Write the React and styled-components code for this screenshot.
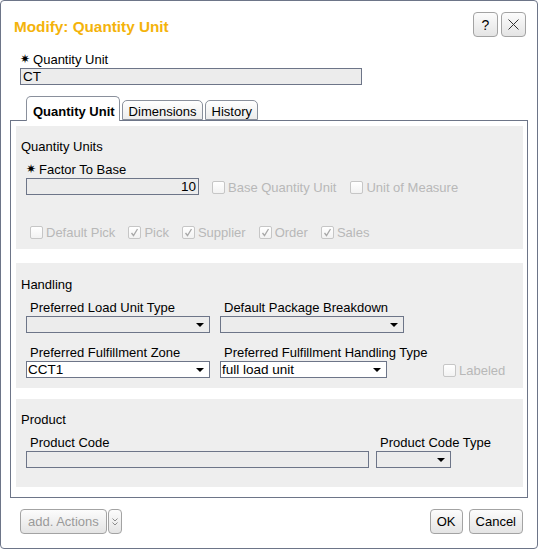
import React from 'react';
import styled, { createGlobalStyle } from 'styled-components';

const GlobalStyle = createGlobalStyle`
  body {
    margin: 0;
    background: #ffffff;
    font-family: 'Liberation Sans', Arial, sans-serif;
    font-size: 13px;
    color: #000;
  }
`;

const Dialog = styled.div`
  box-sizing: border-box;
  width: 538px;
  height: 549px;
  border: 1px solid #6d7588;
  border-radius: 4px;
  background: #fff;
  display: flex;
  flex-direction: column;
`;

const Header = styled.div`
  display: flex;
  align-items: center;
  justify-content: space-between;
  padding: 11px 11px 0 13px;
`;

const Title = styled.h1`
  margin: 4px 0 0;
  font-size: 15.3px;
  line-height: 20px;
  font-weight: bold;
  color: #f4b30b;
`;

const HeadButtons = styled.div`
  display: flex;
  gap: 3px;
`;

const Button = styled.button`
  box-sizing: border-box;
  height: 25px;
  width: ${(p) => (p.$w ? `${p.$w}px` : 'auto')};
  padding: 0 ${(p) => (p.$pad !== undefined ? p.$pad : 6)}px;
  border: 1px solid #a3a3a3;
  border-radius: 4px;
  background: linear-gradient(#fcfcfc, #e4e4e4);
  font-family: inherit;
  font-size: 13px;
  color: ${(p) => (p.disabled ? '#9a9a9a' : '#000')};
  display: flex;
  align-items: center;
  justify-content: center;
  cursor: default;

  svg {
    display: block;
    flex: none;
  }
`;

const IconButton = styled(Button)`
  width: 25px;
  padding: 0;
  font-size: 14px;
`;

const Top = styled.div`
  padding: 15px 0 0 19px;
`;

const Label = styled.div`
  font-size: 13px;
  line-height: 15px;
  padding-left: ${(p) => p.$indent || 0}px;
  white-space: nowrap;
  display: flex;
  align-items: center;
`;

const Star = styled.span`
  font-family: 'DejaVu Sans', sans-serif;
  font-size: 12px;
  line-height: 15px;
  margin-right: 3px;
`;

const TextBox = styled.div`
  box-sizing: border-box;
  width: ${(p) => p.$w}px;
  height: 17px;
  margin-top: 1px;
  border: 1px solid #6d7588;
  background: ${(p) => (p.$white ? '#fff' : '#ececec')};
  font-size: 13.5px;
  line-height: 15px;
  padding: 0 2px;
  text-align: ${(p) => (p.$right ? 'right' : 'left')};
  white-space: nowrap;
`;

const SelectBox = styled(TextBox)`
  display: flex;
  align-items: center;
  justify-content: space-between;
  padding: 0 5px 0 1px;
`;

const Arrow = styled.span`
  width: 0;
  height: 0;
  border-left: 4px solid transparent;
  border-right: 4px solid transparent;
  border-top: 4px solid #000;
  margin-top: 1px;
`;

const Tabs = styled.div`
  display: flex;
  align-items: flex-end;
  gap: 2px;
  margin: 11px 0 0 25px;
  position: relative;
  z-index: 1;
  height: 24px;
`;

const Tab = styled.div`
  box-sizing: border-box;
  height: ${(p) => (p.$active ? 25 : 20)}px;
  margin-bottom: ${(p) => (p.$active ? -1 : 0)}px;
  padding: ${(p) => (p.$active ? '7px 4px 0 6px' : '3px 5px 0 6px')};
  border: 1px solid #8a909c;
  border-bottom: ${(p) => (p.$active ? 'none' : '1px solid #8a909c')};
  border-radius: 5px 5px 0 0;
  background: ${(p) => (p.$active ? '#fff' : 'linear-gradient(#ffffff, #ececec)')};
  font-size: 13px;
  line-height: 15px;
  font-weight: ${(p) => (p.$active ? 'bold' : 'normal')};
  white-space: nowrap;
`;

const Panel = styled.div`
  box-sizing: border-box;
  margin: 0 9px;
  height: 378px;
  border: 1px solid #6d7588;
  padding: 5px 4px 0 5px;
  display: flex;
  flex-direction: column;
`;

const Section = styled.div`
  box-sizing: border-box;
  background: #eeeeee;
  height: ${(p) => p.$h}px;
  margin-top: ${(p) => p.$mt || 0}px;
  padding: ${(p) => p.$pt || 13}px 0 0 5px;
`;

const SectionTitle = styled.div`
  font-size: 13px;
  line-height: 15px;
  margin-bottom: ${(p) => p.$mb || 8}px;
`;

const Row = styled.div`
  display: flex;
  align-items: ${(p) => p.$align || 'flex-end'};
  gap: ${(p) => p.$gap || 0}px;
  padding-left: ${(p) => p.$indent || 0}px;
  margin-top: ${(p) => p.$mt || 0}px;
  margin-left: ${(p) => p.$ml || 0}px;
  align-self: ${(p) => p.$self || 'auto'};
`;

const Field = styled.div`
  display: flex;
  flex-direction: column;
  width: ${(p) => (p.$w ? `${p.$w}px` : 'auto')};
`;

const CheckLabel = styled.label`
  display: flex;
  align-items: center;
  gap: 3px;
  color: #b8b8b8;
  font-size: 13px;
  line-height: 15px;
  white-space: nowrap;
`;

const Box = styled.span`
  box-sizing: border-box;
  width: 13px;
  height: 13px;
  border: 1px solid #c6c6c6;
  border-radius: 2px;
  background: linear-gradient(#ffffff, #f2f2f2);
  display: flex;
  align-items: center;
  justify-content: center;
`;

const Footer = styled.div`
  display: flex;
  justify-content: space-between;
  align-items: center;
  padding: 11px 14px 0 19px;
`;

const ButtonGroup = styled.div`
  display: flex;
  gap: ${(p) => p.$gap || 0}px;
`;

const Check = ({ label, checked }) => (
  <CheckLabel>
    <Box>
      {checked && (
        <svg width="9" height="9" viewBox="0 0 9 9">
          <path d="M1.5 5 L3.5 7.5 L7.5 1" fill="none" stroke="#a8a8a8" strokeWidth="1.3" />
        </svg>
      )}
    </Box>
    {label}
  </CheckLabel>
);

const Select = ({ w, value, white }) => (
  <SelectBox $w={w} $white={white}>
    <span>{value}</span>
    <Arrow />
  </SelectBox>
);

export default function App() {
  return (
    <>
      <GlobalStyle />
      <Dialog>
        <Header>
          <Title>Modify: Quantity Unit</Title>
          <HeadButtons>
            <IconButton>?</IconButton>
            <IconButton>
              <svg width="11" height="11" viewBox="0 0 11 11">
                <path d="M0.5 0.5 L10.5 10.5 M10.5 0.5 L0.5 10.5" stroke="#333" strokeWidth="1" />
              </svg>
            </IconButton>
          </HeadButtons>
        </Header>

        <Top>
          <Label>
            <Star>✷</Star>Quantity Unit
          </Label>
          <TextBox $w={342}>CT</TextBox>
        </Top>

        <Tabs>
          <Tab $active>Quantity Unit</Tab>
          <Tab>Dimensions</Tab>
          <Tab>History</Tab>
        </Tabs>

        <Panel>
          <Section $h={123}>
            <SectionTitle $mb={8}>Quantity Units</SectionTitle>
            <Row $indent={5} $gap={13}>
              <Field>
                <Label>
                  <Star>✷</Star>Factor To Base
                </Label>
                <TextBox $w={173} $right>
                  10
                </TextBox>
              </Field>
              <Row $gap={14} $align="center" $self="flex-end">
                <Check label="Base Quantity Unit" />
                <Check label="Unit of Measure" />
              </Row>
            </Row>
            <Row $indent={9} $gap={13} $mt={30} $align="center">
              <Check label="Default Pick" />
              <Check label="Pick" checked />
              <Check label="Supplier" checked />
              <Check label="Order" checked />
              <Check label="Sales" checked />
            </Row>
          </Section>

          <Section $h={125} $mt={14} $pt={14}>
            <SectionTitle $mb={8}>Handling</SectionTitle>
            <Row $indent={5} $gap={10}>
              <Field $w={184}>
                <Label $indent={4}>Preferred Load Unit Type</Label>
                <Select w={184} />
              </Field>
              <Field $w={184}>
                <Label $indent={4}>Default Package Breakdown</Label>
                <Select w={184} />
              </Field>
            </Row>
            <Row $indent={5} $gap={10} $mt={12}>
              <Field $w={184}>
                <Label $indent={4}>Preferred Fulfillment Zone</Label>
                <Select w={184} value="CCT1" white />
              </Field>
              <Field $w={167}>
                <Label $indent={4}>Preferred Fulfillment Handling Type</Label>
                <Select w={167} value="full load unit" white />
              </Field>
              <Row $align="center" $ml={46}>
                <Check label="Labeled" />
              </Row>
            </Row>
          </Section>

          <Section $h={88} $mt={11}>
            <SectionTitle $mb={8}>Product</SectionTitle>
            <Row $indent={5} $gap={7}>
              <Field>
                <Label $indent={4}>Product Code</Label>
                <TextBox $w={343} />
              </Field>
              <Field>
                <Label $indent={4}>Product Code Type</Label>
                <Select w={75} />
              </Field>
            </Row>
          </Section>
        </Panel>

        <Footer>
          <ButtonGroup $gap={1}>
            <Button disabled $pad={7}>
              add. Actions
            </Button>
            <Button disabled $pad={0} $w={14}>
              <svg width="8" height="12" viewBox="0 0 8 12">
                <path
                  d="M1.5 2.5 L4 5 L6.5 2.5 M1.5 6.5 L4 9 L6.5 6.5"
                  fill="none"
                  stroke="#8c8c8c"
                  strokeWidth="1"
                />
              </svg>
            </Button>
          </ButtonGroup>
          <ButtonGroup $gap={6}>
            <Button $pad={6}>OK</Button>
            <Button $pad={6}>Cancel</Button>
          </ButtonGroup>
        </Footer>
      </Dialog>
    </>
  );
}
